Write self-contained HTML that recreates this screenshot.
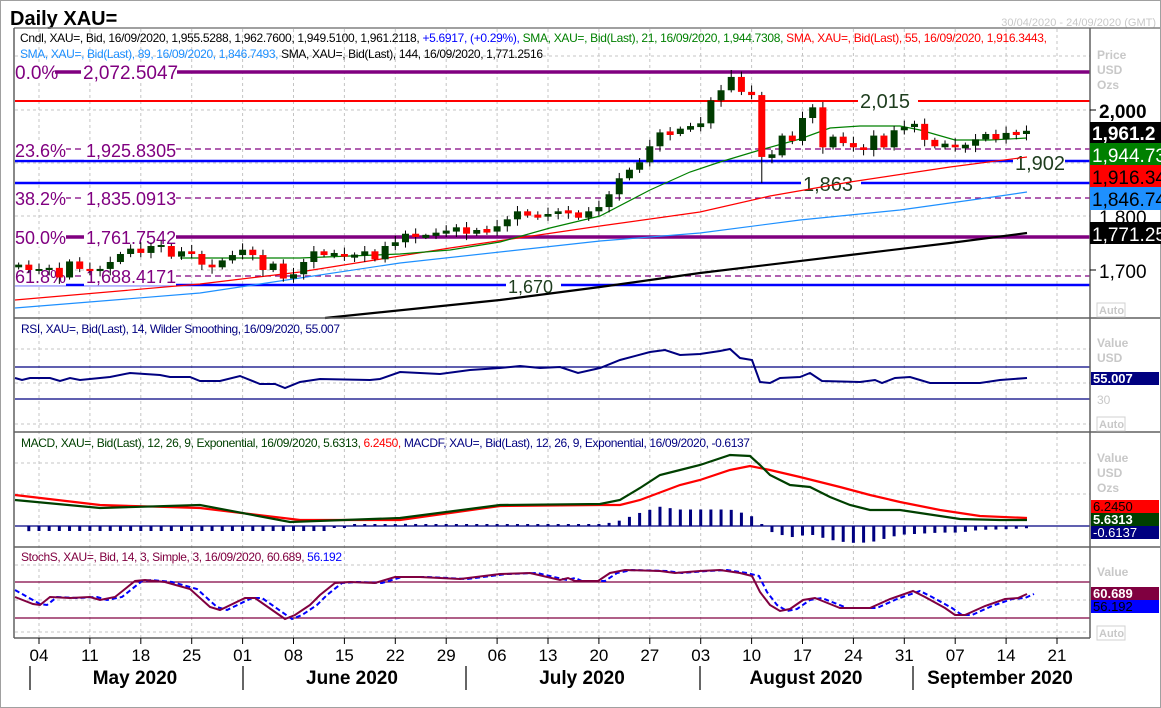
<!DOCTYPE html>
<html><head><meta charset="utf-8"><style>
html,body{margin:0;padding:0;background:#fff;}
svg{display:block;font-family:"Liberation Sans",sans-serif;}
</style></head><body>
<svg id="s" width="1161" height="708" viewBox="0 0 1161 708" xmlns="http://www.w3.org/2000/svg">
<rect x="0.5" y="0.5" width="1160" height="707" fill="#fff" stroke="#a0a0a0"/>
<text x="10" y="25" font-size="20" font-weight="bold" fill="#000">Daily XAU=</text>
<text x="1156" y="26" font-size="11" fill="#c8c8c8" text-anchor="end">30/04/2020 - 24/09/2020 (GMT)</text>
<g id="grid" stroke="#c4c4c4" stroke-dasharray="3,3" stroke-width="1"></g>
<g id="levels"></g>
<g id="lines" fill="none"></g>
<g id="cand"></g>
<g id="frame" fill="none" stroke="#606060" stroke-width="1.5">
<line x1="14" y1="28" x2="1160" y2="28" stroke="#808080"/>
<line x1="14" y1="28" x2="14" y2="638"/>
<line x1="1090" y1="28" x2="1090" y2="638"/>
<line x1="14" y1="318" x2="1160" y2="318"/>
<line x1="14" y1="432" x2="1160" y2="432"/>
<line x1="14" y1="547" x2="1160" y2="547"/>
<line x1="14" y1="638" x2="1090" y2="638"/>
</g>
<text x="20" y="42" font-size="12" textLength="1027" lengthAdjust="spacing"><tspan fill="#000">Cndl, XAU=, Bid, 16/09/2020, 1,955.5288, 1,962.7600, 1,949.5100, 1,961.2118, </tspan><tspan fill="#0000ff">+5.6917, (+0.29%), </tspan><tspan fill="#008000">SMA, XAU=, Bid(Last),  21, 16/09/2020, 1,944.7308, </tspan><tspan fill="#ff0000">SMA, XAU=, Bid(Last),  55, 16/09/2020, 1,916.3443,</tspan></text>
<text x="20" y="58" font-size="12" textLength="523" lengthAdjust="spacing"><tspan fill="#1e90ff">SMA, XAU=, Bid(Last),  89, 16/09/2020, 1,846.7493, </tspan><tspan fill="#000">SMA, XAU=, Bid(Last),  144, 16/09/2020, 1,771.2516</tspan></text>
<text x="21" y="333" font-size="12" fill="#000080" textLength="319" lengthAdjust="spacing">RSI, XAU=, Bid(Last),  14, Wilder Smoothing, 16/09/2020, 55.007</text>
<text x="21" y="447" font-size="12" textLength="729" lengthAdjust="spacing"><tspan fill="#004000">MACD, XAU=, Bid(Last),  12, 26, 9, Exponential, 16/09/2020, 5.6313, </tspan><tspan fill="#ff0000">6.2450, </tspan><tspan fill="#000080">MACDF, XAU=, Bid(Last),  12, 26, 9, Exponential, 16/09/2020, -0.6137</tspan></text>
<text x="21" y="561" font-size="12" textLength="321" lengthAdjust="spacing"><tspan fill="#800040">StochS, XAU=, Bid,  14, 3, Simple, 3, 16/09/2020, 60.689, </tspan><tspan fill="#0000ff">56.192</tspan></text>
<g font-size="12" fill="#c8c8c8" font-weight="bold">
<text x="1097" y="59">Price</text><text x="1097" y="74">USD</text><text x="1097" y="89">Ozs</text>
<text x="1097" y="347">Value</text><text x="1097" y="362">USD</text>
<text x="1097" y="462">Value</text><text x="1097" y="477">USD</text><text x="1097" y="492">Ozs</text>
<text x="1097" y="576">Value</text>
</g>
<g font-size="11" fill="#c8c8c8" font-weight="bold">
<rect x="1097" y="303" width="28" height="14" fill="none" stroke="#d0d0d0"/><text x="1099" y="314">Auto</text>
<rect x="1097" y="417" width="28" height="14" fill="none" stroke="#d0d0d0"/><text x="1099" y="428">Auto</text>
<rect x="1097" y="626" width="28" height="14" fill="none" stroke="#d0d0d0"/><text x="1099" y="637">Auto</text>
<text x="1097" y="404" font-weight="normal" font-size="12">30</text>
</g>
<g font-size="19" font-weight="bold">
<line x1="1090" y1="110" x2="1096" y2="110" stroke="#000"/>
<text x="1099" y="118" fill="#000">2,000</text>
<line x1="1090" y1="270" x2="1096" y2="270" stroke="#000"/>
<text x="1099" y="278" fill="#000" font-weight="normal">1,700</text>
<text x="1099" y="224" fill="#000" font-weight="normal">1,800</text>
<rect x="1090" y="122" width="71" height="21" fill="#000"/><text x="1092" y="140" fill="#fff">1,961.2</text>
<rect x="1090" y="143" width="71" height="22" fill="#008000"/><text x="1092" y="162" fill="#fff" font-weight="normal">1,944.73</text>
<rect x="1090" y="165" width="71" height="22" fill="#ff0000"/><text x="1092" y="184" fill="#000" font-weight="normal">1,916.34</text>
<rect x="1090" y="187" width="71" height="23" fill="#1e90ff"/><text x="1092" y="206" fill="#000" font-weight="normal">1,846.74</text>
<rect x="1090" y="222" width="71" height="22" fill="#000"/><text x="1092" y="241" fill="#fff" font-weight="normal">1,771.25</text>
</g>
<g font-size="13" font-weight="bold">
<rect x="1091" y="372" width="68" height="13" fill="#000080"/><text x="1093" y="383" fill="#fff">55.007</text>
<rect x="1091" y="500" width="68" height="13" fill="#ff0000"/><text x="1093" y="511" fill="#000" font-weight="normal">6.2450</text>
<rect x="1091" y="513" width="68" height="13" fill="#004000"/><text x="1093" y="524" fill="#fff">5.6313</text>
<rect x="1091" y="526" width="68" height="13" fill="#000080"/><text x="1093" y="537" fill="#fff" font-weight="normal">-0.6137</text>
<rect x="1091" y="587" width="68" height="13" fill="#800040"/><text x="1093" y="598" fill="#fff">60.689</text>
<rect x="1091" y="600" width="68" height="13" fill="#0000ff"/><text x="1093" y="611" fill="#000" font-weight="normal">56.192</text>
</g>
<g id="ticks" font-size="17" fill="#000" text-anchor="middle"></g>
<g font-size="19" font-weight="bold" fill="#000" text-anchor="middle">
<text x="135" y="684">May 2020</text><text x="352" y="684">June 2020</text><text x="582" y="684">July 2020</text><text x="806" y="684">August 2020</text><text x="1000" y="684">September 2020</text>
</g>
<g stroke="#000" stroke-width="1.2">
<line x1="30" y1="666" x2="30" y2="690"/><line x1="243" y1="666" x2="243" y2="690"/><line x1="466" y1="666" x2="466" y2="690"/><line x1="700" y1="666" x2="700" y2="690"/><line x1="913" y1="666" x2="913" y2="690"/>
</g>
</svg>
<script>
(function(){
var NS="http://www.w3.org/2000/svg";
function el(p,t,a,txt){var e=document.createElementNS(NS,t);for(var k in a)e.setAttribute(k,a[k]);if(txt!=null)e.textContent=txt;document.getElementById(p).appendChild(e);return e;}
var X0=39,W=50.9;
for(var k=0;k<21;k++){var x=X0+W*k;el("grid","line",{x1:x,y1:29,x2:x,y2:638});}
[56,110,163,216,270,349,383,424,463,494,600,632,565].forEach(function(y){el("grid","line",{x1:15,y1:y,x2:1090,y2:y});});
var tl=["04","11","18","25","01","08","15","22","29","06","13","20","27","03","10","17","24","31","07","14","21"];
tl.forEach(function(t,k){var x=X0+W*k;el("ticks","line",{x1:x,y1:638,x2:x,y2:644,stroke:"#000"});el("ticks","text",{x:x,y:661},t);});
function py(p){return 110+(2000-p)*0.5333;}
function hl(y,c,w,dash){var a={x1:15,y1:y,x2:1090,y2:y,stroke:c,"stroke-width":w};if(dash)a["stroke-dasharray"]=dash;el("levels","line",a);}
hl(72,"#800080",3.5);hl(101,"#ff0000",2);hl(149,"#800080",1.2,"6,4");hl(161,"#0000ff",2.5);hl(183,"#0000ff",2.5);hl(198,"#800080",1.2,"6,4");hl(237,"#800080",3.5);hl(276,"#800080",1.2,"6,4");hl(285,"#0000ff",2.5);
function lab(x,y,t,c,fs,bw){el("levels","rect",{x:x-2,y:y-fs*0.8,width:bw,height:fs*0.95,fill:"#fff"});el("levels","text",{x:x,y:y,"font-size":fs,fill:c},t);}
lab(15,79,"0.0%","#800080",19,42);lab(83,79,"2,072.5047","#800080",19,96);
lab(15,157,"23.6%","#800080",18,53);lab(86,157,"1,925.8305","#800080",18,92);
lab(15,205,"38.2%","#800080",18,53);lab(86,205,"1,835.0913","#800080",18,92);
lab(15,244,"50.0%","#800080",18,53);lab(86,244,"1,761.7542","#800080",18,92);
lab(15,283,"61.8%","#800080",18,53);lab(86,283,"1,688.4171","#800080",18,92);
lab(860,108,"2,015","#1e3d1e",20,60);lab(803,191,"1,863","#1e3d1e",20,60);lab(1015,170,"1,902","#1e3d1e",20,52);lab(508,293,"1,670","#1e3d1e",18,55);
function pl(pts,c,w,dash){var a={points:pts.map(function(p){return p.join(",")}).join(" "),stroke:c,"stroke-width":w,fill:"none"};if(dash)a["stroke-dasharray"]=dash;el("lines","polyline",a);}
pl([[15,308],[200,293],[400,263],[600,241],[700,233],[800,220],[900,210],[1000,196],[1027,192]],"#1e90ff",1.2);
pl([[15,300],[200,284],[300,272],[450,248],[600,226],[700,212],[770,196],[850,182],[950,167],[1027,157]],"#ff0000",1.2);
pl([[325,318],[500,300],[600,287],[700,273],[850,255],[950,243],[1027,233]],"#000",2.2);
pl([[180,258],[300,258],[400,254],[450,250],[500,242],[550,228],[600,216],[650,190],[690,172],[720,162],[760,150],[800,139],[830,128],[860,126],[900,126],[920,130],[955,140],[990,140],[1027,138]],"#008000",1.2);
pl([[15,367],[1090,367]],"#000080",1.2);pl([[15,399],[1090,399]],"#000080",1.2);
pl([[15,378],[22,380],[30,378],[50,378],[60,381],[70,378],[80,380],[110,377],[130,373],[160,375],[170,377],[190,377],[200,381],[220,381],[240,376],[260,384],[275,384],[285,388],[300,382],[320,379],[370,380],[380,379],[400,372],[440,374],[470,370],[500,368],[520,366],[540,368],[560,367],[578,373],[600,368],[620,360],[650,352],[665,350],[680,355],[700,354],[720,351],[730,349],[740,358],[752,360],[760,382],[770,383],[780,378],[800,377],[810,373],[822,381],[860,382],[875,380],[882,383],[895,378],[910,377],[920,380],[930,383],[980,383],[1000,380],[1027,378]],"#000080",2);
pl([[15,526],[1090,526]],"#000080",1.2);
var G=[[15,500],[100,508],[200,505],[290,522],[400,518],[500,505],[600,504],[620,500],[640,488],[660,475],[680,470],[700,465],[730,455],[750,456],[760,465],[770,475],[790,485],[810,487],[830,497],[850,505],[870,510],[900,510],[960,519],[1000,520],[1027,520]];
var R=[[15,495],[100,505],[200,508],[300,520],[400,520],[500,506],[600,505],[620,505],[640,500],[680,485],[700,480],[730,470],[750,466],[770,470],[800,477],[840,487],[870,495],[900,502],[940,510],[980,516],[1027,518]];
function ip(a,x){for(var i=1;i<a.length;i++){if(x<=a[i][0]){var t=(x-a[i-1][0])/(a[i][0]-a[i-1][0]);return a[i-1][1]+t*(a[i][1]-a[i-1][1]);}}return a[a.length-1][1];}
for(var d=-2;d<=97;d++){var x=X0+d*10.18;var h=(ip(R,x)-ip(G,x))*1.1;if(x<330&&h>-5)h=-5;if(Math.abs(h)<2)h=h<0?-2:2;if(x>=20)el("lines","line",{x1:x,y1:526,x2:x,y2:526-h,stroke:"#000080","stroke-width":3});}
pl(R,"#ff0000",2.2);pl(G,"#004000",2.2);
pl([[15,582],[1090,582]],"#800040",1.2);pl([[15,618],[1090,618]],"#800040",1.2);
var K=[[15,597],[33,604],[40,605],[50,597],[70,598],[90,597],[100,600],[115,597],[135,581],[145,580],[165,582],[190,589],[210,607],[220,610],[245,598],[255,598],[275,612],[285,619],[295,615],[310,605],[320,595],[335,583],[350,582],[375,583],[395,577],[420,577],[460,579],[500,574],[530,573],[560,580],[568,578],[575,581],[598,581],[610,573],[625,570],[660,571],[675,573],[700,571],[720,570],[740,573],[752,576],[760,592],[770,605],[780,611],[790,609],[803,600],[815,598],[830,604],[840,608],[870,608],[890,599],[913,591],[925,597],[945,608],[955,615],[965,615],[985,606],[1005,599],[1018,598],[1027,594]];
var D=K.map(function(p){return [p[0]+7,p[1]];});D[0]=[15,590];
pl(D,"#0000ff",2,"5,3");pl(K,"#800040",2);
var C=[1710,1700,1700,1704,1686,1716,1702,1698,1702,1715,1730,1740,1732,1745,1745,1725,1735,1730,1710,1705,1718,1728,1738,1728,1700,1712,1684,1692,1715,1735,1728,1730,1725,1727,1735,1720,1745,1752,1768,1762,1764,1770,1772,1780,1768,1775,1772,1782,1795,1810,1802,1800,1805,1810,1808,1798,1810,1818,1842,1872,1888,1902,1932,1958,1955,1965,1968,1975,2018,2037,2062,2034,2028,1912,1915,1952,1942,1985,2005,1930,1950,1938,1930,1925,1952,1930,1962,1968,1974,1944,1932,1935,1930,1933,1945,1955,1945,1957,1955,1961];
var prev=1705;
for(var i=0;i<C.length;i++){var d=i-2,x=X0+d*10.18,o=prev,c=C[i];
 var hi=Math.max(o,c)+4+((i*7)%5)*2,lo=Math.min(o,c)-4-((i*11)%5)*2;
 if(i==73)lo=1863; if(i==70)hi=2075;if(i==71)hi=2072;if(i==79)hi=2015;
 el("cand","line",{x1:x,y1:py(hi),x2:x,y2:py(lo),stroke:"#000","stroke-width":1});
 var y1=py(Math.max(o,c)),y2=py(Math.min(o,c));if(y2-y1<2){y1-=1;y2+=1;}
 el("cand","rect",{x:x-3.5,y:y1,width:7,height:y2-y1,fill:c>=o?"#003c00":"#ff0000"});
 prev=c;}
})();
</script>
</body></html>
